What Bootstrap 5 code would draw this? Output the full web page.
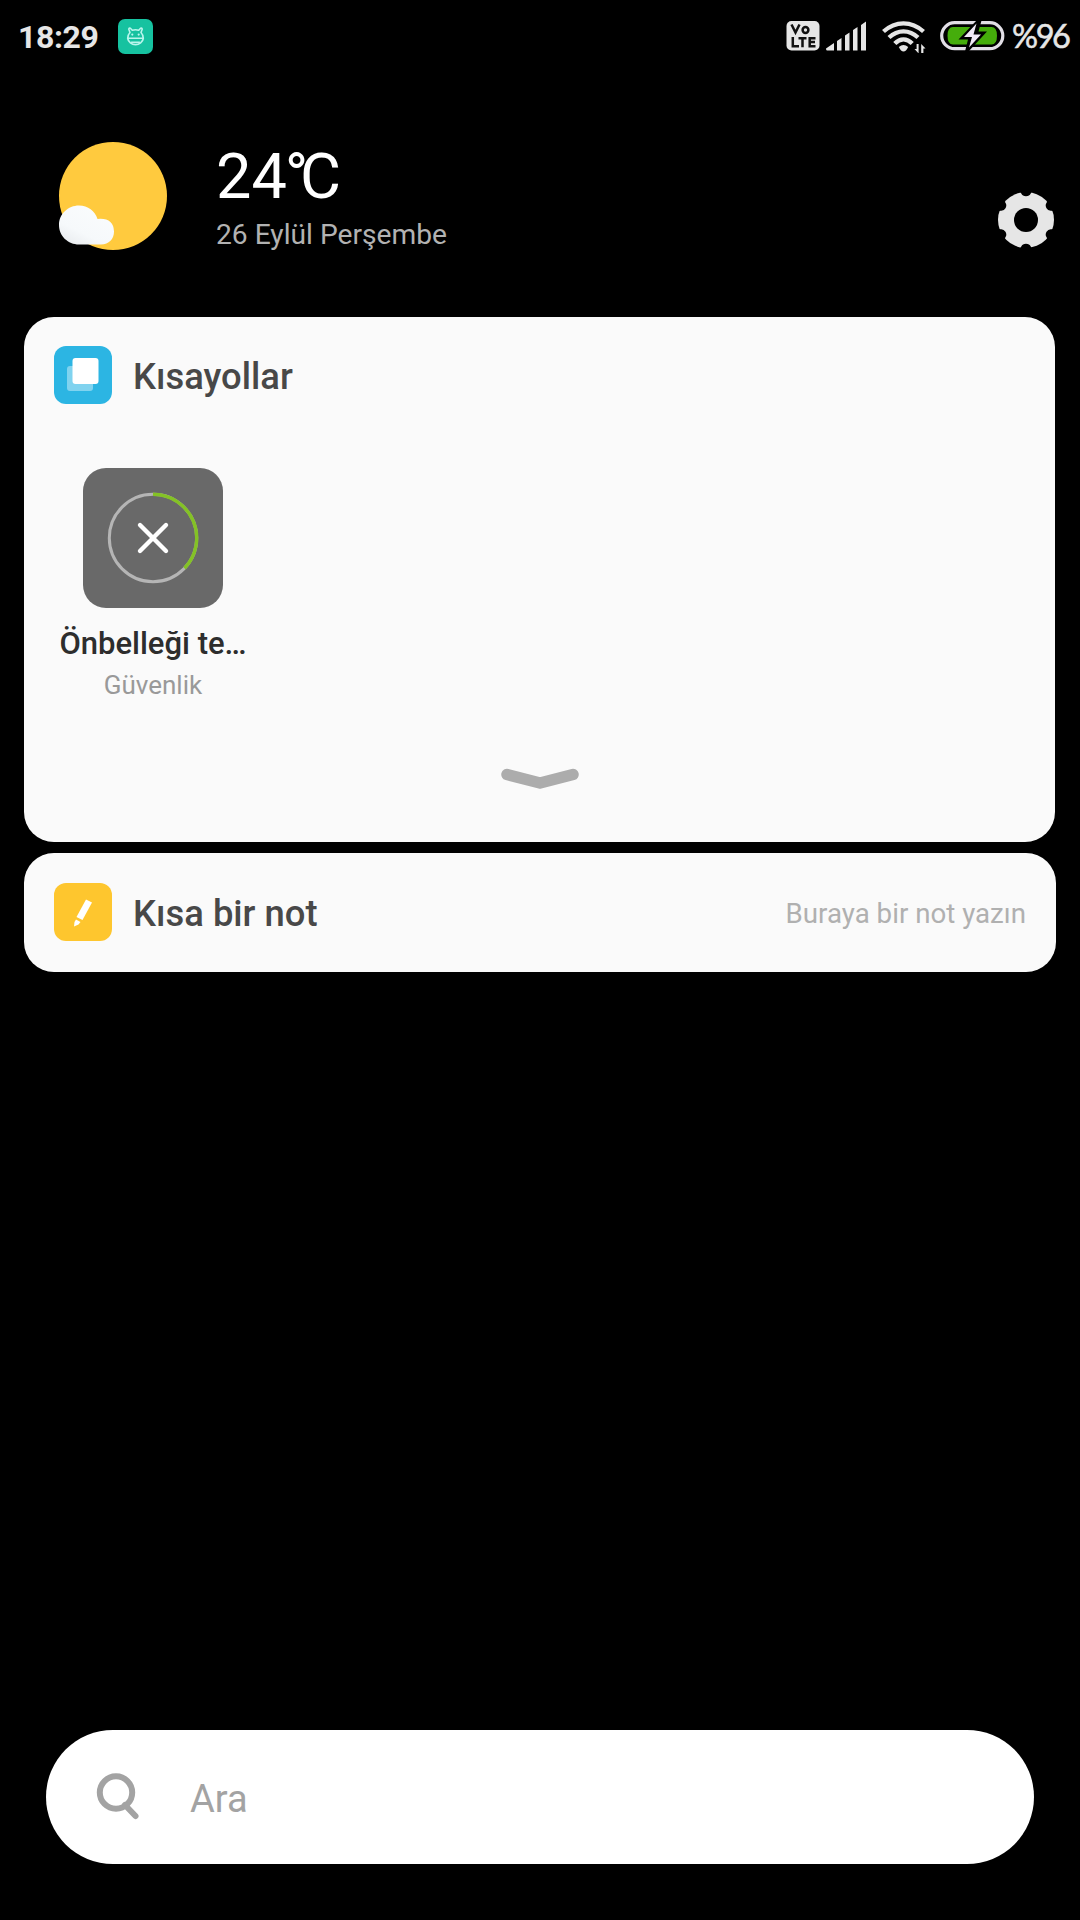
<!DOCTYPE html>
<html lang="tr">
<head>
<meta charset="utf-8">
<meta name="viewport" content="width=device-width, initial-scale=1">
<title>Ana ekran</title>
<link href="https://cdn.jsdelivr.net/npm/bootstrap@5.3.0/dist/css/bootstrap.min.css" rel="stylesheet">
<style>
body{background:#000;font-family:Roboto,"Noto Sans",sans-serif;width:1080px;height:1920px;overflow:hidden}
svg{display:block;flex:none}
.statusbar{height:72px;padding:0 9px 0 18px;color:#e6e6e6}
.clock{font-size:32px;font-weight:700;line-height:1;width:82px;margin-right:18px;letter-spacing:-.4px;padding-top:1px}
.pct{font-family:Lato,sans-serif;font-size:32.5px;line-height:1;letter-spacing:-2.4px;width:59px;margin-left:7px;padding-top:1px;-webkit-text-stroke:.5px #e6e6e6}
.battery{margin-left:14px}
.wifi{margin-left:12px;margin-right:-1px}
.weather{height:244.5px;padding:70px 25px 0 59px}
.weather-text{margin-left:48px}
.temp{font-size:63px;line-height:66px;color:#fff;margin:2px 0 0 1px}
.temp-four{letter-spacing:-2px}
.temp-deg{letter-spacing:-8.5px}
.today{font-size:28.2px;line-height:36px;color:#b2b2b2;margin:7px 0 0 1px}
.gear{margin-top:50px}
.panel{background:#fafafa;border:0;border-radius:30px}
.panel-tall{margin:0 25px 0 24.4px;height:525.5px}
.panel-note{margin:11px 24px 0;height:119px;padding:0 30px}
.panel-note>svg{margin-bottom:2px}
.panel-head{height:58px;margin:29.5px 29.6px 0}
.panel-title{font-size:36.4px;font-weight:500;line-height:1;color:#484848;margin-left:21px;padding-top:4px}
.panel-note .hint{padding-top:2px}
.hint{font-size:27.7px;line-height:1;color:#b0b0b0}
.shortcut{width:200px;margin:63.5px 0 0 28.6px}
.shortcut-name{font-size:31px;font-weight:500;line-height:36px;color:#2d2d2d;margin-top:18px}
.shortcut-app{font-size:26px;line-height:32px;color:#999;margin-top:7px}
.handle{margin-top:auto;margin-bottom:48.5px}
.searchbar{margin:auto 46px 56px;height:134px;padding-left:50px;background:#fff}
.search-text{font-size:38px;line-height:1;color:#a3a3a3;margin-left:50px;padding-top:4px}
</style>
</head>
<body class="d-flex flex-column m-0">
<header class="statusbar d-flex align-items-center">
  <span class="clock">18:29</span>
  <svg width="35" height="35" viewBox="0 0 35 35"><rect width="35" height="35" rx="7" fill="#16c2a0"/><g fill="none" stroke="#b9f5ec" stroke-width="1.6" stroke-linecap="round" stroke-linejoin="round"><path d="M12 13.500 10.800 10.300Q11 8.800 12.400 9.300L14.300 11.300Q17.500 10.300 20.700 11.300L22.600 9.300Q24 8.800 24.200 10.300L23 13.500Q25.500 16 25.300 19.500A7.900 7.300 0 0 1 9.700 19.500Q9.500 16 12 13.500Z"/><path d="M9.800 19.300H25.200M13.500 23.200H21.500"/></g><circle cx="14.300" cy="15.600" r="1.100" fill="#b9f5ec"/><circle cx="20.700" cy="15.600" r="1.100" fill="#b9f5ec"/></svg>
  <svg class="ms-auto" width="34" height="30" viewBox="0 0 34 30"><rect x=".5" width="33" height="29.500" rx="5" fill="#e6e6e6"/><g fill="none" stroke="#111" stroke-width="2.500"><path d="M5.500 3.500 9.500 11.500 13.500 3.500"/><circle cx="19.500" cy="9" r="2.900"/><path d="M6.800 16V25.200H13M12.500 17.200H20.500M16.500 17V26.300M29.500 17.200H23.700V25.200H29.500M23.700 21H29"/></g></svg>
  <svg class="ms-1" width="45" height="30" viewBox="0 0 45 30" fill="#e6e6e6"><path d="M2 27.500 10 22V29.500H3Q2 29.500 2 27.500ZM13 20 17.500 17V29.500H13ZM21 14.500 25.500 11.500V29.500H21ZM29 9 33.500 6V29.500H29ZM37 4 42 .5V29.500H37Z"/></svg>
  <svg class="wifi" width="46" height="34" viewBox="0 0 46 34"><g fill="none" stroke="#e6e6e6" stroke-width="4.300"><path d="M2.500 12.500Q11.500 4.300 22.500 4.300T42.500 12.500M8 18.500Q14.500 12.300 22.500 12.300T37 18.500M13.800 24.500Q17.800 20.300 22.500 20.300T31.200 24.500"/></g><path d="M17.800 28Q22.500 24 27.200 28Q25 32.500 22.500 32.500T17.800 28Z" fill="#e6e6e6"/><path d="M37.600 25V34.500L33.500 30H35.600V25ZM40.200 34.500V25L44.500 29.500H42.400V34.500Z" fill="#e6e6e6"/></svg>
  <svg class="battery" width="65" height="34" viewBox="0 0 65 34"><rect x="1.700" y="3.700" width="61.100" height="26" rx="13" fill="none" stroke="#e2dfe6" stroke-width="3.200"/><path d="M13 8H51.500Q57 8 57 16.700T51.500 25.400H13Q7.500 25.400 7.500 16.700T13 8Z" fill="#45ad0b"/><path d="M36.500 1.500 18.500 20.500H28L25 32.500H28.500L47 12.500H38.500L41.500 1.500Z" fill="#000"/><path d="M36.500 4.500 24 18H32L29 28.500 41 15.500H33.500Z" fill="#f0e9f6"/></svg>
  <span class="pct">%96</span>
</header>

<section class="weather d-flex align-items-start">
  <svg width="108" height="108" viewBox="0 0 108 108"><defs><linearGradient id="cl" x1="0" y1="1" x2=".7" y2="0"><stop stop-color="#e6e9ec"/><stop offset=".4" stop-color="#f6f9fb"/><stop offset="1" stop-color="#fafcfd"/></linearGradient></defs><circle cx="54" cy="54" r="54" fill="#ffca3e"/><path d="M20 63.500C29 63.500 36 69 38.500 77Q54.500 75.500 55 89.500C55 97 50 102.500 42 102.500H20C9 102.500 0 94 0 83S9 63.500 20 63.500Z" fill="url(#cl)"/></svg>
  <div class="weather-text">
    <div class="temp">2<span class="temp-four">4</span><span class="temp-deg">°</span>C</div>
    <div class="today">26 Eylül Perşembe</div>
  </div>
  <svg class="gear ms-auto" width="58" height="58" viewBox="0 0 58 58"><defs><mask id="gm"><rect width="58" height="58" fill="#fff"/><circle cx="29" cy="28" r="12" fill="#000"/><path id="nt" d="M20-4 24.300 1.500Q25.500 4.300 29 4.300T33.700 1.500L38-4Z" fill="#000"/><use href="#nt" transform="rotate(60 29 28)"/><use href="#nt" transform="rotate(120 29 28)"/><use href="#nt" transform="rotate(180 29 28)"/><use href="#nt" transform="rotate(240 29 28)"/><use href="#nt" transform="rotate(300 29 28)"/></mask></defs><circle cx="29" cy="28" r="28" fill="#e6e6e6" mask="url(#gm)"/></svg>
</section>

<section class="card panel panel-tall">
  <div class="panel-head d-flex align-items-center">
    <svg width="58" height="58" viewBox="0 0 58 58"><rect width="58" height="58" rx="12" fill="#2cb5e3"/><rect x="13" y="20" width="26" height="25" rx="3" fill="#80d3ef"/><rect x="18.500" y="12" width="26" height="26" rx="3" fill="#fff"/></svg>
    <span class="panel-title">Kısayollar</span>
  </div>
  <div class="shortcut text-center">
    <svg class="mx-auto" width="140" height="140" viewBox="0 0 140 140"><rect width="140" height="140" rx="23" fill="#696969"/><circle cx="70" cy="70" r="43.700" fill="none" stroke="#b5b5b5" stroke-width="3"/><path d="M70 26.300A43.700 43.700 0 0 1 101.500 100.300" fill="none" stroke="#84c225" stroke-width="3.400"/><path d="M57 57 83 83M83 57 57 83" stroke="#fff" stroke-width="4.400" stroke-linecap="round"/></svg>
    <div class="shortcut-name text-nowrap">Önbelleği te…</div>
    <div class="shortcut-app">Güvenlik</div>
  </div>
  <svg class="handle mx-auto" width="80" height="30" viewBox="0 0 80 30"><path d="M7 10.500 40 19 73 10.500" fill="none" stroke="#acacac" stroke-width="11.500" stroke-linecap="round" stroke-linejoin="round"/></svg>
</section>

<section class="card panel panel-note flex-row align-items-center">
  <svg width="58" height="58" viewBox="0 0 58 58"><rect width="58" height="58" rx="12" fill="#fec62e"/><path d="M32 16.500 38 19.500 28.500 37 22.500 34Z" fill="#fff"/><path d="M22 36.500 26.500 39 24.500 41.500 20 43.500 20.500 39Z" fill="#fff"/></svg>
  <span class="panel-title">Kısa bir not</span>
  <span class="hint ms-auto">Buraya bir not yazın</span>
</section>

<section class="searchbar rounded-pill d-flex align-items-center">
  <svg width="44" height="50" viewBox="0 0 44 50" fill="none" stroke="#a3a3a3"><circle cx="20" cy="20.500" r="16.200" stroke-width="6"/><path d="M29 33 39.500 44" stroke-width="6" stroke-linecap="round"/></svg>
  <span class="search-text">Ara</span>
</section>
<script src="https://cdn.jsdelivr.net/npm/bootstrap@5.3.0/dist/js/bootstrap.bundle.min.js"></script>
</body>
</html>
